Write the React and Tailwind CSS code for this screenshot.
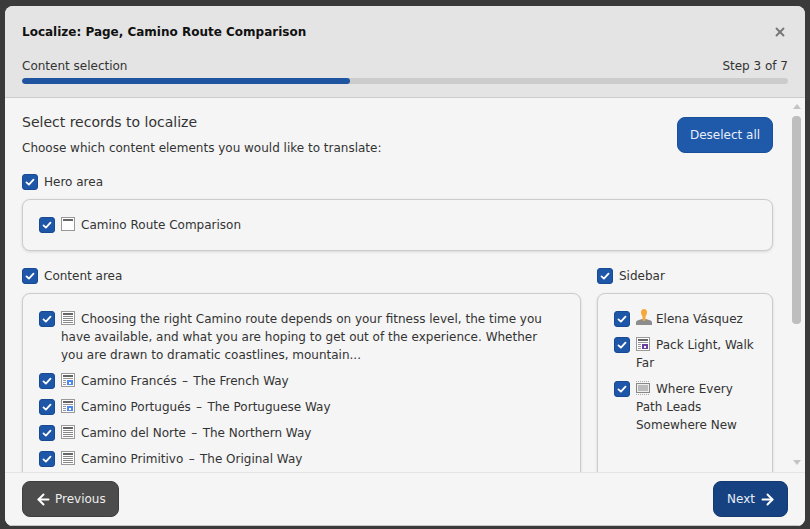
import React from 'react';
import { ArrowLeft, ArrowRight, X } from 'lucide-react';

function Check() {
  return (
    <span className="flex h-4 w-4 shrink-0 items-center justify-center rounded-[3px] border border-[#174a94] bg-[#1e56a8]">
      <svg width="10" height="10" viewBox="0 0 10 10" fill="none" stroke="#fff" strokeWidth="1.8" strokeLinecap="round" strokeLinejoin="round">
        <path d="M1.5 5.4 L3.9 7.6 L8.5 2.6" />
      </svg>
    </span>
  );
}

function HeaderIcon() {
  return (
    <svg width="14" height="14" viewBox="0 0 14 14" className="mr-[6px] inline-block align-[-2px]">
      <rect x="0.5" y="0.5" width="13" height="13" fill="#fff" stroke="#999" />
      <rect x="2" y="2" width="10" height="2" fill="#666" />
    </svg>
  );
}

function TextIcon() {
  return (
    <svg width="14" height="14" viewBox="0 0 14 14" className="mr-[6px] inline-block align-[-2px]">
      <rect x="0.5" y="0.5" width="13" height="13" fill="#fff" stroke="#999" />
      <rect x="2" y="2" width="10" height="2" fill="#666" />
      <path d="M2 5.5h10M2 7.5h10M2 9.5h10M2 11.5h10" stroke="#888" />
    </svg>
  );
}

function ImageTextIcon({ color }) {
  return (
    <svg width="14" height="14" viewBox="0 0 14 14" className="mr-[6px] inline-block align-[-2px]">
      <rect x="0.5" y="0.5" width="13" height="13" fill="#fff" stroke="#999" />
      <rect x="2" y="2" width="10" height="2" fill="#666" />
      <path d="M2 5.5h10M2 7.5h3M2 9.5h3M2 11.5h3" stroke="#999" />
      <rect x="6" y="7" width="6" height="5" fill={color} />
      <rect x="8" y="9" width="2" height="2" fill="#fff" />
    </svg>
  );
}

function MediaIcon() {
  return (
    <svg width="14" height="14" viewBox="0 0 14 14" className="mr-[6px] inline-block align-[-2px]">
      <path d="M0 0.5h14M0 13.5h14" stroke="#aaa" strokeDasharray="1 1" />
      <rect x="0.5" y="2.5" width="13" height="9" fill="#eee" stroke="#888" />
      <rect x="2" y="4" width="10" height="6" fill="#bbb" />
    </svg>
  );
}

function UserIcon() {
  return (
    <svg width="16" height="16" viewBox="0 0 16 16" className="-mt-[2px] mr-[4px] inline-block align-[-2px]">
      <path d="M0 16v-2.500c0-1.200 1-1.800 2.200-2.200L6 10h4l3.800 1.300c1.200.4 2.200 1 2.200 2.200V16z" fill="#8c8c8c" />
      <path d="M8 0c2 0 3 1.300 3 3.200 0 2-1 3.500-1.500 4.300V10.500c0 .8-.7 1.500-1.500 1.500s-1.500-.7-1.500-1.500V7.500C6 6.700 5 5.200 5 3.200 5 1.300 6 0 8 0z" fill="#f6a93b" />
    </svg>
  );
}

function Dash() {
  return <span className="mx-[1.5px]">–</span>;
}

function Row({ icon, children }) {
  return (
    <div className="mb-2 flex items-start gap-[6px]">
      <Check />
      <div className="min-w-0 flex-1 -translate-y-[1px]">
        {icon}
        {children}
      </div>
    </div>
  );
}

function GroupLabel({ children }) {
  return (
    <div className="flex h-4 items-center gap-[6px]">
      <Check />
      <span>{children}</span>
    </div>
  );
}

function Card({ children, className = '' }) {
  return (
    <div className={`mt-[9px] rounded-lg border border-[#ccc] bg-[#f5f5f5] pl-4 pt-[17px] shadow-[0_1px_3px_rgba(0,0,0,0.12)] ${className}`}>
      {children}
    </div>
  );
}

export default function App() {
  return (
    <div className="h-[529px] w-[810px] overflow-hidden bg-[#3a3a3a] pl-[5px] pt-[6px] font-['DejaVu_Sans',sans-serif] text-[12px] leading-[18px] text-[#333]">
      <div className="flex h-[520px] w-[800px] flex-col overflow-hidden rounded-lg bg-[#f5f5f5]">
        {/* Header */}
        <div className="h-[92px] shrink-0 border-b border-[#ccc] bg-[#e4e4e4] px-[17px]">
          <div className="flex h-[51px] items-center justify-between">
            <h1 className="font-bold text-[#111]">Localize: Page, Camino Route Comparison</h1>
            <X size={14} strokeWidth={3.25} className="mr-[1px] text-[#777]" />
          </div>
          <div className="flex h-[18px] justify-between">
            <span>Content selection</span>
            <span>Step 3 of 7</span>
          </div>
          <div className="mt-[3px] h-[6px] overflow-hidden rounded-[3px] bg-[#ccc]">
            <div className="h-full w-[328px] rounded-[3px] bg-[#1e54a0]" />
          </div>
        </div>

        {/* Body */}
        <div className="relative min-h-0 flex-1 overflow-hidden pl-[17px] pr-[32px] pt-[15px]">
          <div className="flex items-start justify-between">
            <div>
              <h2 className="mt-[1px] text-[14px] leading-[17px]">Select records to localize</h2>
              <p className="mt-[8px]">Choose which content elements you would like to translate:</p>
            </div>
            <button className="mt-[4px] h-[36px] w-[96px] rounded-lg border border-[#1a4f9c] bg-[#1f59a9] text-center text-[#e8eef8]">Deselect all</button>
          </div>

          <div className="mt-[17px]">
            <GroupLabel>Hero area</GroupLabel>
            <Card className="h-[52px] pr-4">
              <Row icon={<HeaderIcon />}>Camino Route Comparison</Row>
            </Card>
          </div>

          <div className="mt-[17px] flex gap-4">
            <div className="w-[559px] shrink-0">
              <GroupLabel>Content area</GroupLabel>
              <Card className="h-[260px] pr-[22px]">
                <Row icon={<TextIcon />}>
                  Choosing the right Camino route depends on your fitness level, the time you have available, and what you are hoping to get out of the experience. Whether you are drawn to dramatic coastlines, mountain...
                </Row>
                <Row icon={<ImageTextIcon color="#4d8af0" />}>Camino Francés <Dash /> The French Way</Row>
                <Row icon={<ImageTextIcon color="#4d8af0" />}>Camino Portugués <Dash /> The Portuguese Way</Row>
                <Row icon={<TextIcon />}>Camino del Norte <Dash /> The Northern Way</Row>
                <Row icon={<TextIcon />}>Camino Primitivo <Dash /> The Original Way</Row>
              </Card>
            </div>
            <div className="w-[176px] shrink-0">
              <GroupLabel>Sidebar</GroupLabel>
              <Card className="h-[260px] pr-4">
                <Row icon={<UserIcon />}>Elena Vásquez</Row>
                <Row icon={<ImageTextIcon color="#6b3fa0" />}>Pack Light, Walk Far</Row>
                <Row icon={<MediaIcon />}>Where Every Path Leads Somewhere New</Row>
              </Card>
            </div>
          </div>

          {/* Scrollbar */}
          <div className="absolute right-[1px] top-0 flex h-full w-[15px] flex-col items-center pt-[6px]">
            <span className="h-0 w-0 border-x-[4.5px] border-b-[5px] border-x-transparent border-b-[#c4c4c4]" />
            <span className="mt-[7px] h-[208px] w-[9px] rounded-[4px] bg-[#bebebe]" />
            <span className="absolute bottom-[7px] h-0 w-0 border-x-[4.5px] border-t-[5px] border-x-transparent border-t-[#c4c4c4]" />
          </div>
        </div>

        {/* Footer */}
        <div className="flex h-[54px] shrink-0 items-start justify-between border-t border-b border-t-[#e4e4e4] border-b-[#c4c4c4] bg-[#f5f5f5] px-[17px] pt-[8px]">
          <button className="flex h-[36px] w-[97px] items-center gap-[3.5px] rounded-lg border border-[#3e3e3e] bg-[#4c4c4c] pl-[11.5px] text-[#eee]">
            <ArrowLeft size={17} strokeWidth={2.8} className="text-white" />
            Previous
          </button>
          <button className="flex h-[36px] w-[75px] items-center gap-[4px] rounded-lg border border-[#133a72] bg-[#164281] pl-[13px] text-[#e8eef8]">
            Next
            <ArrowRight size={17} strokeWidth={2.8} className="text-white" />
          </button>
        </div>
      </div>
    </div>
  );
}
